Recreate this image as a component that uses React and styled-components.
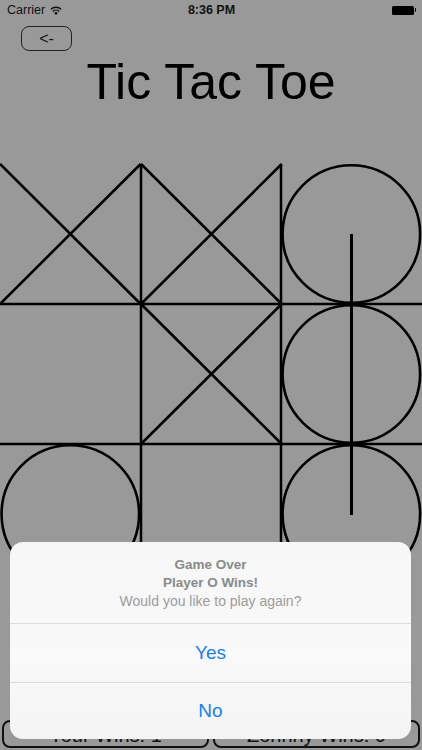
import React from "react";
import styled, { createGlobalStyle } from "styled-components";

const GlobalStyle = createGlobalStyle`
  body {
    margin: 0;
    background: #999999;
    font-family: "Liberation Sans", Arial, sans-serif;
  }
`;

const Screen = styled.div`
  position: relative;
  width: 422px;
  height: 750px;
  overflow: hidden;
  background: #999999;
  display: flex;
  flex-direction: column;
`;

const StatusBar = styled.div`
  height: 20px;
  display: grid;
  grid-template-columns: 1fr auto 1fr;
  align-items: center;
  padding: 0 6px 0 7px;
  color: #111;
  font-size: 12.5px;
`;

const Carrier = styled.div`
  display: flex;
  align-items: center;
  gap: 5px;
`;

const Clock = styled.div`
  font-weight: 600;
  font-size: 12.5px;
`;

const Battery = styled.div`
  justify-self: end;
  display: flex;
  align-items: center;
`;

const BatteryBody = styled.div`
  width: 22px;
  height: 9px;
  background: #000;
  border-radius: 1.5px;
`;

const BatteryNub = styled.div`
  width: 1.5px;
  height: 3.5px;
  margin-left: 1px;
  background: #000;
  border-radius: 0 1px 1px 0;
`;

const BackButton = styled.button`
  margin: 6px 0 0 21px;
  width: 51px;
  height: 25px;
  padding: 0;
  border: 1.5px solid #222;
  border-radius: 8px;
  background: transparent;
  color: #111;
  font-family: "Liberation Sans", Arial, sans-serif;
  font-size: 16px;
  line-height: 20px;
`;

const Title = styled.h1`
  margin: 6px 0 0;
  height: 50px;
  text-align: center;
  font-size: 50px;
  line-height: 50px;
  font-weight: 400;
  color: #000;
`;

const Board = styled.div`
  position: relative;
  margin-top: 57px;
  display: grid;
  grid-template-columns: repeat(3, 1fr);
  grid-template-rows: repeat(3, 140px);
`;

const Cell = styled.div`
  position: relative;
  box-shadow: ${(p) => (p.$right ? "1.25px 0 0 #000, inset -1.25px 0 0 #000" : "0 0 0 transparent")}${(p) =>
      p.$bottom ? ", 0 1.25px 0 #000, inset 0 -1.25px 0 #000" : ""};
  z-index: ${(p) => (p.$right || p.$bottom ? 1 : 0)};

  svg {
    position: absolute;
    inset: 0;
    width: 100%;
    height: 100%;
    overflow: visible;
  }
`;

const WinLine = styled.div`
  position: absolute;
  left: calc(500% / 6 - 1.25px);
  top: 70px;
  width: 2.5px;
  height: 281px;
  background: #000;
  z-index: 2;
`;

const ScoreBar = styled.div`
  margin-top: auto;
  padding: 0 2px 2px;
  display: grid;
  grid-template-columns: 1fr 1fr;
  gap: 4px;
`;

const ScoreButton = styled.div`
  box-sizing: border-box;
  height: 28px;
  padding-top: 3px;
  border: 2px solid #111;
  border-radius: 8px;
  display: flex;
  align-items: flex-start;
  justify-content: center;
  font-size: 20px;
  line-height: 20px;
  color: #111;
`;

const Alert = styled.div`
  position: absolute;
  left: 10px;
  top: 542px;
  width: 401px;
  height: 197px;
  background: linear-gradient(180deg, #f7f7f7 0%, #f9f9f9 60%, #f4f4f4 100%);
  border-radius: 13px;
  display: flex;
  flex-direction: column;
  overflow: hidden;
  z-index: 5;
`;

const AlertHeader = styled.div`
  padding: 14px 16px 13px;
  text-align: center;
  font-size: 14px;
  line-height: 18px;
`;

const AlertTitle = styled.div`
  font-weight: 700;
  font-size: 13.5px;
  color: #8a8a8a;
`;

const AlertMessage = styled.div`
  color: #9c9c9c;
`;

const AlertAction = styled.div`
  height: ${(p) => p.$height}px;
  border-top: 1px solid #dcdcdc;
  display: flex;
  align-items: center;
  justify-content: center;
  font-size: 19px;
  color: #2180e2;
`;

const Cross = () => (
  <svg>
    <line x1="0" y1="0" x2="100%" y2="100%" stroke="#000" strokeWidth="2.6" />
    <line x1="0" y1="100%" x2="100%" y2="0" stroke="#000" strokeWidth="2.6" />
  </svg>
);

const Nought = () => (
  <svg>
    <circle cx="50%" cy="50%" r="49%" fill="none" stroke="#000" strokeWidth="2.6" />
  </svg>
);

const board = ["X", "X", "O", "", "X", "O", "O", "", "O"];

const App = () => {
  return (
    <Screen>
      <GlobalStyle />
      <StatusBar>
        <Carrier>
          Carrier
          <svg width="12" height="9" viewBox="0 0 12 9">
            <path d="M6 9 L4.2 6.9 A2.6 2.6 0 0 1 7.8 6.9 Z" fill="#111" />
            <path d="M2.8 5.4 A4.6 4.6 0 0 1 9.2 5.4" fill="none" stroke="#111" strokeWidth="1.4" />
            <path d="M0.9 3.3 A7.2 7.2 0 0 1 11.1 3.3" fill="none" stroke="#111" strokeWidth="1.4" />
          </svg>
        </Carrier>
        <Clock>8:36 PM</Clock>
        <Battery>
          <BatteryBody />
          <BatteryNub />
        </Battery>
      </StatusBar>

      <div>
        <BackButton>&lt;-</BackButton>
      </div>
      <Title>Tic Tac Toe</Title>

      <Board>
        {board.map((mark, i) => (
          <Cell key={i} $right={i % 3 < 2} $bottom={i < 6}>
            {mark === "X" && <Cross />}
            {mark === "O" && <Nought />}
          </Cell>
        ))}
        <WinLine />
      </Board>

      <ScoreBar>
        <ScoreButton>Your Wins: 1</ScoreButton>
        <ScoreButton>Zohnny Wins: 0</ScoreButton>
      </ScoreBar>

      <Alert>
        <AlertHeader>
          <AlertTitle>Game Over</AlertTitle>
          <AlertTitle>Player O Wins!</AlertTitle>
          <AlertMessage>Would you like to play again?</AlertMessage>
        </AlertHeader>
        <AlertAction $height={59}>Yes</AlertAction>
        <AlertAction $height={57}>No</AlertAction>
      </Alert>
    </Screen>
  );
};

export default App;
